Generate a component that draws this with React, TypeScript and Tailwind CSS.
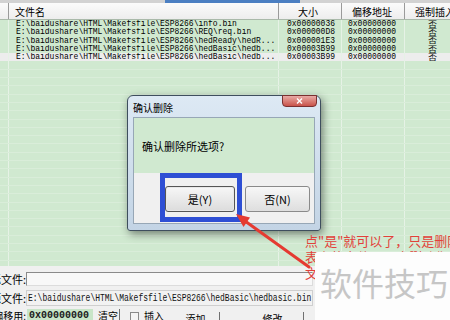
import React from "react";

const rows: [string, string][] = [
  ["E:\\baidushare\\HTML\\Makefsfile\\ESP8266\\info.bin", "0x00000036"],
  ["E:\\baidushare\\HTML\\Makefsfile\\ESP8266\\REQ\\req.bin", "0x000000D8"],
  ["E:\\baidushare\\HTML\\Makefsfile\\ESP8266\\hedReady\\hedR...", "0x000001E3"],
  ["E:\\baidushare\\HTML\\Makefsfile\\ESP8266\\hedBasic\\hedb...", "0x00003B99"],
  ["E:\\baidushare\\HTML\\Makefsfile\\ESP8266\\hedBasic\\hedb...", "0x00003B99"],
];

const empty = Array.from({ length: 30 }, (_, i) => i);

const mono = "font-['Liberation_Mono',monospace] text-[8px] leading-[8px] text-black whitespace-nowrap";

function Row({ path, size, sel }: { path?: string; size?: string; sel?: boolean }) {
  return (
    <div
      className={`flex h-[8.3px] shrink-0 ${path ? "" : "border-b border-[#d9edd9]"} ${sel ? "bg-[#ededed]" : ""}`}
    >
      <div className="w-[9px] border-r border-[#e6f2e6]" />
      <div className="w-[270px] border-r border-[#e6f2e6] pl-[7px] overflow-hidden">
        <div className={`${mono} scale-y-[1.1]`}>{path}</div>
      </div>
      <div className="w-[63px] border-r border-[#e6f2e6] pl-[8px]">
        <div className={`${mono} scale-y-[1.1]`}>{size}</div>
      </div>
      <div className="w-[63px] border-r border-[#e6f2e6] pl-[6px]">
        <div className={`${mono} scale-y-[1.1]`}>{path ? "0x00000000" : ""}</div>
      </div>
      <div className="flex-1 pl-[23px] flex items-center">
        {path ? <span className="text-[9px] leading-[9px] text-[#111] scale-y-[0.85]">否</span> : null}
      </div>
    </div>
  );
}

export default function App() {
  return (
    <div className="relative w-[450px] h-[320px] overflow-hidden bg-[#f0f0f0] font-['Noto_Sans_CJK_SC','Noto_Sans',sans-serif] text-black">
      {/* top strip */}
      <div className="flex h-[3px] bg-[#d2d2d2]">
        <div className="w-[165px]" />
        <div className="w-[135px] bg-[#4b7fc2]" />
      </div>
      {/* header */}
      <div className="flex h-[17px] bg-linear-to-b from-[#fbfbfb] to-[#ededed] border-b border-[#a9b9a9] text-[10px] leading-[14px]">
        <div className="w-[9px] border-r border-[#9a9a9a]" />
        <div className="w-[270px] border-r border-[#9a9a9a] pl-[6px] pt-[2px]">文件名</div>
        <div className="w-[63px] border-r border-[#9a9a9a] pt-[2px] pl-[19px]">大小</div>
        <div className="w-[63px] border-r border-[#9a9a9a] pt-[2px] pl-[10px]">偏移地址</div>
        <div className="flex-1 pt-[2px] pl-[10px] whitespace-nowrap overflow-hidden">强制插入</div>
      </div>
      {/* list body */}
      <div className="h-[246px] overflow-hidden bg-[#d0e9d0] flex flex-col">
        {rows.map((r, i) => (
          <Row key={i} path={r[0]} size={r[1]} sel={i === 4} />
        ))}
        {empty.map((i) => (
          <Row key={"e" + i} />
        ))}
      </div>
      {/* bottom panel */}
      <div className="h-[54px] pt-[6px] text-[11px]">
        <div className="flex h-[14px] items-center">
          <div className="w-[26px] overflow-hidden flex justify-end whitespace-nowrap leading-[14px]">目标文件:</div>
          <div className="w-[287px] h-[14px] border border-[#8a8a8a] border-r-[#dcdcdc] border-b-[#dcdcdc] bg-[#f8f8f8]" />
        </div>
        <div className="flex h-[16px] items-center mt-[4px]">
          <div className="w-[26px] overflow-hidden flex justify-end whitespace-nowrap leading-[14px]">源文件:</div>
          <div className="w-[287px] h-[16px] border border-[#cfcfcf] bg-[#f2f2f2] flex items-center pl-[1px] overflow-hidden">
            <span className="font-['Liberation_Mono',monospace] text-[8px] leading-[8px] whitespace-nowrap scale-y-[1.35] origin-left text-[#111]">
              E:\baidushare\HTML\Makefsfile\ESP8266\hedBasic\hedbasic.bin
            </span>
          </div>
        </div>
        <div className="flex h-[14px] items-start mt-[3px] text-[10px] leading-[14px]">
          <div className="w-[26px] overflow-hidden flex justify-end whitespace-nowrap">偏移用:</div>
          <div className="w-[66px] h-[14px] ml-[1px] bg-[#c8e5c8] pl-[2px] overflow-hidden whitespace-nowrap font-['Liberation_Mono',monospace] font-bold text-[10px] leading-[14px] text-[#1a1a1a]">
            0x00000000
          </div>
          <div className="ml-[5px] w-[22px] border-r border-[#707070] h-[14px] whitespace-nowrap overflow-hidden">清空</div>
          <div className="ml-[10px] mt-[3px] w-[9px] h-[9px] border border-[#8a8a8a] bg-[#f4f4f4]" />
          <div className="ml-[5px] whitespace-nowrap">插入</div>
          <div className="ml-[8px] w-[48px] h-[14px] mt-[3px] border-r border-[#707070] text-center leading-[14px]">添加</div>
          <div className="ml-[22px] w-[62px] h-[14px] mt-[3px] border-r border-[#707070] text-center leading-[14px]">修改</div>
        </div>
      </div>

      {/* dialog */}
      <div className="absolute left-[127px] top-[95px] w-[194px] h-[136px] rounded-t-[6px] rounded-b-[3px] border border-[#3e4e5e] bg-linear-to-b from-[#dde9f4] to-[#c3d4e5] shadow-[2px_3px_8px_rgba(0,0,0,0.45)] flex flex-col">
        <div className="relative h-[21px] flex items-center pl-[5px] pt-[2px] text-[10px] leading-[12px]">
          确认删除
          <div className="absolute right-[3px] top-[-1px] w-[35px] h-[12px] rounded-b-[4px] border border-[#7a3030] bg-linear-to-b from-[#e8aaa6] to-[#c8524a] flex items-center justify-center">
            <svg width="7" height="6" viewBox="0 0 7 6">
              <path d="M1 0.5 L6 5.5 M6 0.5 L1 5.5" stroke="#fff" strokeWidth="1.4" />
            </svg>
          </div>
        </div>
        <div className="mx-[5px] border border-[#97a7b6] flex flex-col flex-1">
          <div className="h-[55px] bg-[#d0e9d0] flex items-center pl-[8px] text-[11px] leading-[14px]">
            确认删除所选项?
          </div>
          <div className="flex-1 bg-[#f0f0f0] flex pl-[31px] pt-[13px] gap-[10px]">
            <div className="w-[70px] h-[26px] rounded-[3px] border border-[#555] bg-linear-to-b from-[#f7f7f7] to-[#dcdcdc] shadow-[inset_0_0_0_1px_#e8e8e8] flex items-center justify-center text-[11px]">
              是(Y)
            </div>
            <div className="w-[65px] h-[26px] rounded-[3px] border border-[#8a8a8a] bg-linear-to-b from-[#f7f7f7] to-[#dedede] flex items-center justify-center text-[11px]">
              否(N)
            </div>
          </div>
        </div>
        <div className="h-[6px]" />
      </div>

      {/* blue highlight frame */}
      <div className="absolute left-[160px] top-[173px] w-[82px] h-[49px] border-[5px] border-[#2e4fd4]" />

      {/* arrow */}
      <svg className="absolute left-0 top-0 pointer-events-none" width="450" height="320" viewBox="0 0 450 320">
        <path d="M245 221 L309 267" stroke="#e53a31" strokeWidth="3" strokeLinecap="round" />
        <polygon points="236,214 250,217.5 243.5,227" fill="#e53a31" />
      </svg>

      {/* red note */}
      <div className="absolute left-[305px] top-[233px] text-[13px] leading-[16px] text-[#e2413a] whitespace-nowrap">
        <div>点"是"就可以了，只是删除列</div>
        <div>表上的文件，不会删除你的</div>
        <div>文件。</div>
      </div>

      {/* watermark */}
      <div className="absolute left-[315px] top-[252px] right-0 bottom-0 bg-[#fdfdfd] rounded-tl-[3px] pl-[5px] pt-[10px]">
        <div className="text-[32px] leading-[40px] text-[#c6c6c6] whitespace-nowrap">软件技巧</div>
      </div>
    </div>
  );
}
